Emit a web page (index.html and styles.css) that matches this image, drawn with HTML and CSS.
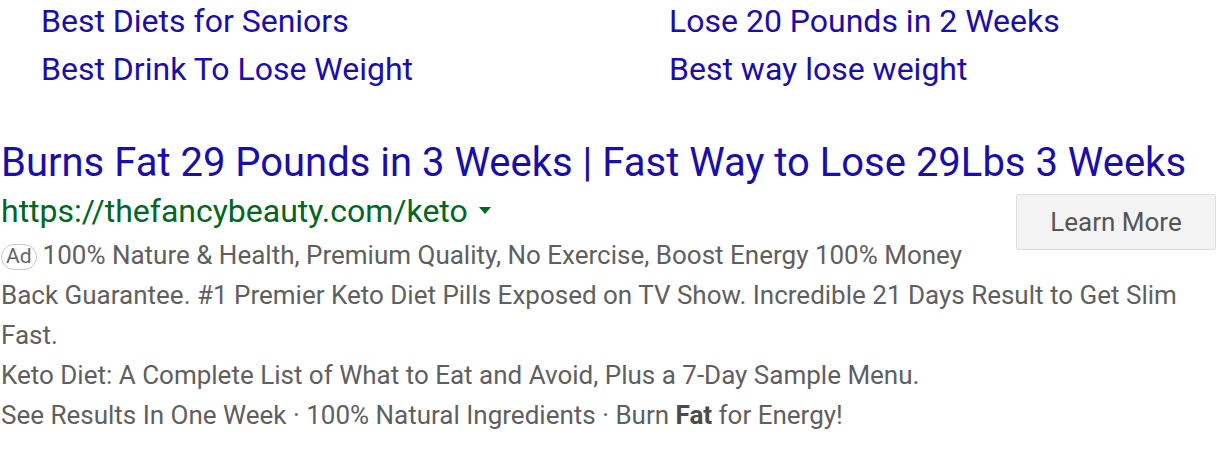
FILE: index.html
```html
<!DOCTYPE html>
<html>
<head>
<meta charset="utf-8">
<link rel="stylesheet" href="styles.css">
</head>
<body>
<div class="related">
  <div class="col">
    <a class="rel-link" href="#">Best Diets for Seniors</a>
    <a class="rel-link" href="#">Best Drink To Lose Weight</a>
  </div>
  <div class="col">
    <a class="rel-link" href="#">Lose 20 Pounds in 2 Weeks</a>
    <a class="rel-link" href="#">Best way lose weight</a>
  </div>
</div>

<div class="ad">
  <a class="ad-title" href="#">Burns Fat 29 Pounds in 3 Weeks | Fast Way to Lose 29Lbs 3 Weeks</a>
  <div class="ad-body">
    <a class="cta" href="#">Learn More</a>
    <div class="ad-url">https://thefancybeauty.com/keto <span class="caret"></span></div>
    <p class="desc"><span class="badge">Ad</span>100% Nature &amp; Health, Premium Quality, No Exercise, Boost Energy 100% Money Back Guarantee. #1 Premier Keto Diet Pills Exposed on TV Show. Incredible 21 Days Result to Get Slim Fast.</p>
    <p class="desc">Keto Diet: A Complete List of What to Eat and Avoid, Plus a 7-Day Sample Menu.</p>
    <p class="desc">See Results In One Week · 100% Natural Ingredients · Burn <b>Fat</b> for Energy!</p>
  </div>
  <div class="sitelinks">
    <a class="rel-link" href="#">Ketolight Keto Supplement Effects</a>
    <a class="rel-link" href="#">Keto Diet Pills Reviews</a>
  </div>
</div>
</body>
</html>
```

FILE: styles.css
```css
html, body {
  margin: 0;
  padding: 0;
  background: #fff;
  font-family: Roboto, "Liberation Sans", Arial, sans-serif;
  overflow: hidden;
}

a { text-decoration: none; }

.related {
  display: grid;
  grid-template-columns: 628px 1fr;
  padding-left: 41px;
  margin-top: -3px;
}

.col {
  display: flex;
  flex-direction: column;
}

.rel-link {
  color: #1a0dab;
  font-size: 32px;
  line-height: 48px;
  white-space: nowrap;
}

.ad {
  margin-top: 47px;
  padding-left: 1px;
}

.ad-title {
  display: block;
  color: #1a0dab;
  font-size: 40px;
  line-height: 46px;
  white-space: nowrap;
}

.ad-body {
  margin-top: 5px;
}

.ad-url {
  color: #006621;
  font-size: 32px;
  line-height: 40px;
  height: 40px;
}

.caret {
  display: inline-block;
  width: 0;
  height: 0;
  border-left: 6px solid transparent;
  border-right: 6px solid transparent;
  border-top: 7px solid #006621;
  vertical-align: middle;
  margin-left: 3px;
  position: relative;
  top: -3px;
}

.cta {
  float: right;
  margin-top: 3px;
  box-sizing: border-box;
  width: 200px;
  height: 56px;
  line-height: 54px;
  text-align: center;
  background: #f3f3f3;
  border: 1px solid #dcdcdc;
  border-radius: 3px;
  color: #555;
  font-size: 26px;
}

.desc {
  margin: 0;
  color: #5f5f5f;
  font-size: 26px;
  line-height: 40px;
}

.desc:first-of-type {
  margin-top: 4px;
}

.desc b {
  font-weight: 700;
  color: #4a4a4a;
}

.badge {
  display: inline-block;
  box-sizing: border-box;
  height: 26px;
  line-height: 23px;
  padding: 0 4px;
  margin-right: 6px;
  border: 1px solid #c8c8c8;
  border-radius: 13px;
  font-size: 21px;
  color: #666;
  vertical-align: 1px;
}

.sitelinks {
  display: grid;
  grid-template-columns: 580px 1fr;
  padding-left: 40px;
  margin-top: 13px;
}
```
